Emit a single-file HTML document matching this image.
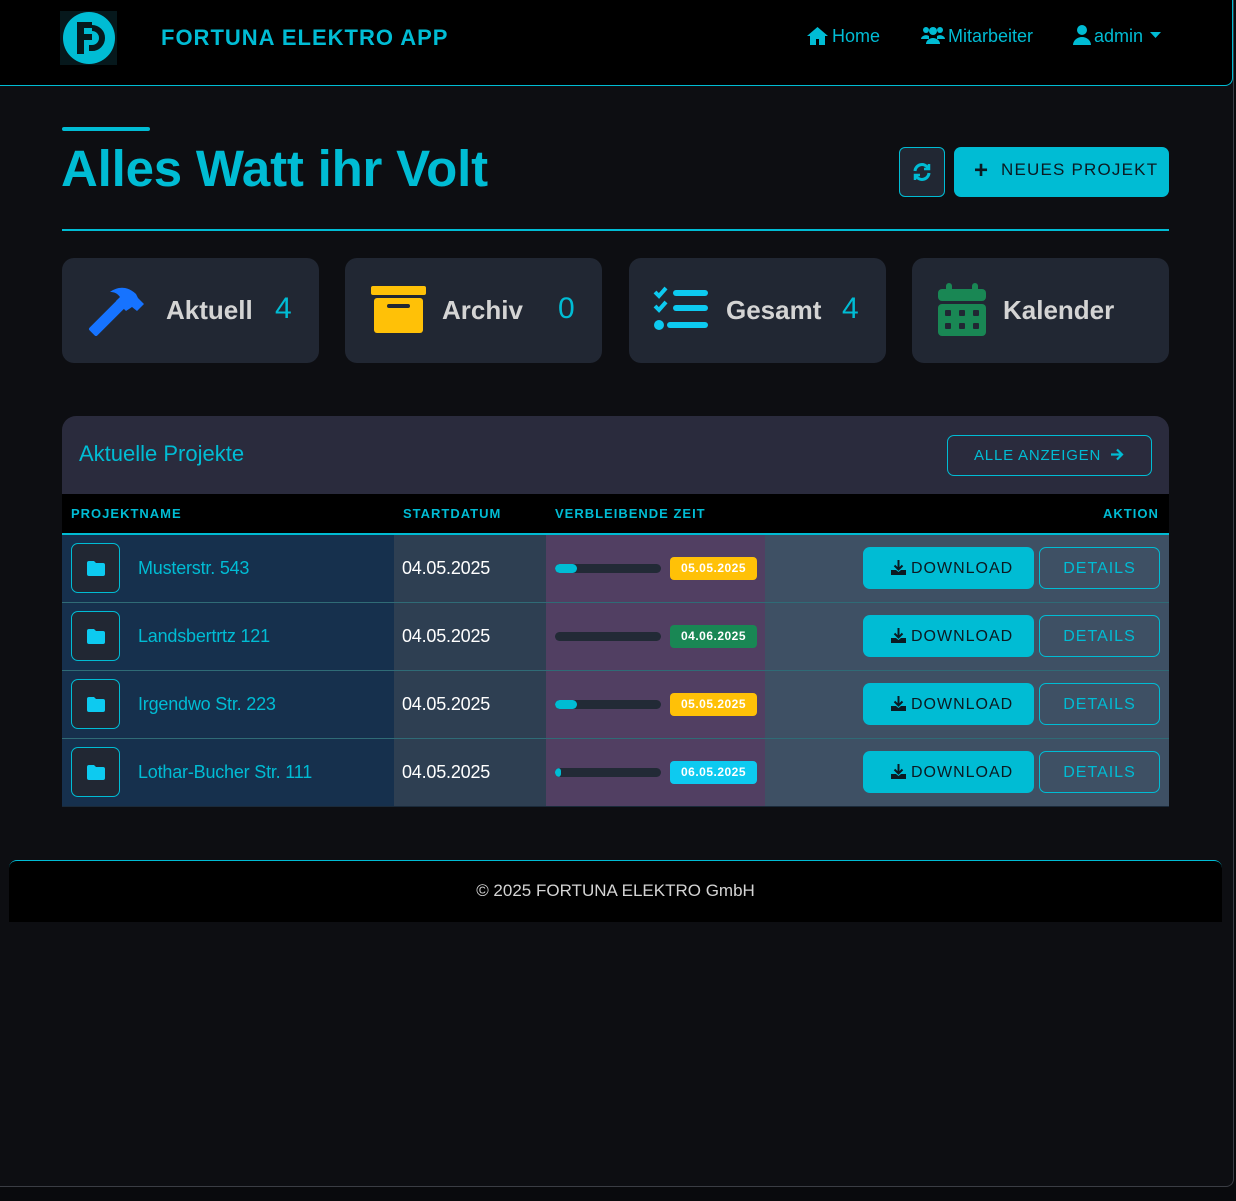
<!DOCTYPE html>
<html><head><meta charset="utf-8"><style>
*{box-sizing:border-box;margin:0;padding:0}
body{width:1236px;height:1201px;background:#090a0d;font-family:"Liberation Sans",sans-serif;position:relative;overflow:hidden}
.frame{position:absolute;left:0;top:0;width:1234px;height:1187px;background:#0d0e12;border-right:1px solid #3a3d44;border-bottom:1px solid #3a3d44;border-bottom-right-radius:8px}
.a{position:absolute}
.nav{left:0;top:0;width:1233px;height:86px;background:#000;border-bottom:1px solid #00bcd4;border-right:1px solid #00bcd4;border-bottom-right-radius:8px}
.cy{color:#00bcd4}
.card{position:absolute;top:258px;width:257px;height:105px;background:#212733;border-radius:12px}
.card .t{position:absolute;top:37px;font-size:26px;font-weight:bold;color:#d4d4d4}
.card .n{position:absolute;top:34px;font-size:30px;color:#00bcd4}
.row{position:absolute;left:62px;width:1107px;height:68px;border-bottom:1px solid #2f6b76}
.c1{position:absolute;left:0;width:332px;top:0;bottom:0;background:#16304d}
.c2{position:absolute;left:332px;width:152px;top:0;bottom:0;background:#2e3f52}
.c3{position:absolute;left:484px;width:219px;top:0;bottom:0;background:#513f62}
.c4{position:absolute;left:703px;width:404px;top:0;bottom:0;background:#3e5064}
.fb{position:absolute;left:9px;top:8px;width:49px;height:50px;border:1px solid #00bcd4;border-radius:7px;background:#212733}
.nm{position:absolute;left:76px;top:23px;font-size:18px;color:#00bcd4;letter-spacing:-.2px}
.dt{position:absolute;left:8px;top:23px;font-size:18px;color:#fff;letter-spacing:-.2px}
.bar{position:absolute;left:9px;top:29px;width:106px;height:9px;background:#222a36;border-radius:5px;overflow:hidden}
.bar i{display:block;height:100%;background:#00bcd4;border-radius:5px}
.bd{position:absolute;left:124px;top:22px;width:87px;height:23px;border-radius:4px;color:#fff;font-size:12px;font-weight:bold;text-align:center;line-height:23px;letter-spacing:.5px}
.dl{position:absolute;left:98px;top:12px;width:171px;height:42px;background:#00bcd4;border-radius:7px;color:#0b1a22;font-size:16px;letter-spacing:1px;line-height:44px;padding-left:48px}
.dl svg{position:absolute;left:28px;top:13px}
.de{position:absolute;left:274px;top:12px;width:121px;height:42px;border:1px solid #00bcd4;border-radius:7px;color:#00bcd4;font-size:16px;letter-spacing:1px;line-height:42px;text-align:center}
</style></head><body>
<div class="frame"></div>
<div class="a nav"></div>
<svg class="a" style="left:60px;top:11px" width="57" height="54" viewBox="0 0 57 54"><rect width="57" height="54" fill="#06181c"/><circle cx="29" cy="27" r="26" fill="#00bcd4"/><path d="M17 11h15v6h-8v6h8v6h-8v14h-7z" fill="#06181c"/><path d="M32 17a10 10 0 0 1 0 20h-3" stroke="#06181c" stroke-width="6" fill="none"/></svg>
<div class="a cy" style="left:161px;top:25px;font-size:22px;font-weight:bold;letter-spacing:1px">FORTUNA ELEKTRO APP</div>
<svg class="a" style="left:807px;top:27px" width="21" height="18" viewBox="0 0 21 18"><path d="M10.5 0L0 9h3v9h6v-6h3v6h6V9h3z" fill="#00bcd4"/></svg>
<div class="a cy" style="left:832px;top:26px;font-size:18px">Home</div>
<svg class="a" style="left:921px;top:26px" width="24" height="18" viewBox="0 0 24 18"><circle cx="5" cy="4" r="3" fill="#00bcd4"/><circle cx="19" cy="4" r="3" fill="#00bcd4"/><circle cx="12" cy="5" r="4" fill="#00bcd4"/><path d="M0 13a5 4 0 0 1 8-3v3zM24 13a5 4 0 0 0-8-3v3zM5 18a7 6 0 0 1 14 0z" fill="#00bcd4"/></svg>
<div class="a cy" style="left:948px;top:26px;font-size:18px">Mitarbeiter</div>
<svg class="a" style="left:1073px;top:25px" width="18" height="20" viewBox="0 0 18 20"><circle cx="9" cy="5" r="5" fill="#00bcd4"/><path d="M0 20a9 8 0 0 1 18 0z" fill="#00bcd4"/></svg>
<div class="a cy" style="left:1094px;top:26px;font-size:18px">admin</div>
<svg class="a" style="left:1150px;top:32px" width="11" height="6"><path d="M0 0h11L5.5 6z" fill="#00bcd4"/></svg>

<div class="a" style="left:62px;top:127px;width:88px;height:4px;background:#00bcd4;border-radius:2px"></div>
<div class="a cy" style="left:61px;top:139px;font-size:51px;font-weight:bold;letter-spacing:-.2px">Alles Watt ihr Volt</div>
<div class="a" style="left:899px;top:147px;width:46px;height:50px;border:1px solid #00bcd4;border-radius:6px;background:#212733"></div>
<svg class="a" style="left:912px;top:162px" width="20" height="20" viewBox="0 0 20 20" fill="none" stroke="#00bcd4" stroke-width="3"><path d="M3 9a7 7 0 0 1 13-3"/><path d="M17 11a7 7 0 0 1-13 3"/><path d="M17 2v5h-5" stroke-width="2.5"/><path d="M3 18v-5h5" stroke-width="2.5"/></svg>
<div class="a" style="left:954px;top:147px;width:215px;height:50px;background:#00bcd4;border-radius:7px;color:#0b1a22;font-size:17px;letter-spacing:1.2px;line-height:45px;padding-left:47px">NEUES PROJEKT</div>
<div class="a" style="left:974px;top:157px;font-size:24px;color:#0b1a22;font-weight:bold">+</div>
<div class="a" style="left:62px;top:229px;width:1107px;height:2px;background:#00bcd4"></div>

<div class="card" style="left:62px"><svg class="a" style="left:26px;top:26px" width="60" height="52" viewBox="0 0 60 52"><path d="M8 50l-5-5 28-28 5 5z" fill="#1673ff" stroke="#1673ff" stroke-width="4" stroke-linejoin="round"/><path d="M22 8c8-6 18-6 26 2l2 4 6 6-7 7-5-4-6 4-10-10 4-4c-3-4-6-5-10-5z" fill="#1673ff"/></svg><div class="t" style="left:104px">Aktuell</div><div class="n" style="left:213px">4</div></div>
<div class="card" style="left:345px"><svg class="a" style="left:26px;top:28px" width="55" height="48" viewBox="0 0 55 48"><rect x="0" y="0" width="55" height="9" rx="2" fill="#ffc107"/><rect x="3" y="12" width="49" height="35" rx="3" fill="#ffc107"/><rect x="16" y="18" width="23" height="4" rx="2" fill="#212733"/></svg><div class="t" style="left:97px">Archiv</div><div class="n" style="left:213px">0</div></div>
<div class="card" style="left:629px"><svg class="a" style="left:24px;top:28px" width="56" height="47" viewBox="0 0 56 47"><path d="M2 6l4 4 7-8M2 20l4 4 7-8" stroke="#0dcaf0" stroke-width="4" fill="none"/><circle cx="6" cy="39" r="5" fill="#0dcaf0"/><rect x="20" y="4" width="35" height="6" rx="3" fill="#0dcaf0"/><rect x="20" y="19" width="35" height="6" rx="3" fill="#0dcaf0"/><rect x="14" y="36" width="41" height="6" rx="3" fill="#0dcaf0"/></svg><div class="t" style="left:97px">Gesamt</div><div class="n" style="left:213px">4</div></div>
<div class="card" style="left:912px"><svg class="a" style="left:26px;top:25px" width="48" height="54" viewBox="0 0 48 54"><rect x="8" y="0" width="6" height="10" rx="3" fill="#198754"/><rect x="34" y="0" width="6" height="10" rx="3" fill="#198754"/><rect x="0" y="6" width="48" height="12" rx="4" fill="#198754"/><rect x="0" y="21" width="48" height="32" rx="4" fill="#198754"/><g fill="#212733"><rect x="7" y="27" width="6" height="6" rx="1"/><rect x="21" y="27" width="6" height="6" rx="1"/><rect x="35" y="27" width="6" height="6" rx="1"/><rect x="7" y="40" width="6" height="6" rx="1"/><rect x="21" y="40" width="6" height="6" rx="1"/><rect x="35" y="40" width="6" height="6" rx="1"/></g></svg><div class="t" style="left:91px">Kalender</div></div>

<div class="a" style="left:62px;top:416px;width:1107px;height:78px;background:#2a2b3d;border-radius:14px 14px 0 0"></div>
<div class="a cy" style="left:79px;top:441px;font-size:22px">Aktuelle Projekte</div>
<div class="a" style="left:947px;top:435px;width:205px;height:41px;border:1px solid #00bcd4;border-radius:7px;color:#00bcd4;font-size:15px;letter-spacing:.8px;line-height:39px;padding-left:26px">ALLE ANZEIGEN</div>
<svg class="a" style="left:1110px;top:448px" width="14" height="13" viewBox="0 0 14 13"><path d="M1 6.5h11M7 1.5l5 5-5 5" stroke="#00bcd4" stroke-width="2.2" fill="none"/></svg>
<div class="a" style="left:62px;top:494px;width:1107px;height:41px;background:#000;border-bottom:2px solid #00bcd4"></div>
<div class="a cy" style="left:71px;top:506px;font-size:13px;font-weight:bold;letter-spacing:1px">PROJEKTNAME</div>
<div class="a cy" style="left:403px;top:506px;font-size:13px;font-weight:bold;letter-spacing:1px">STARTDATUM</div>
<div class="a cy" style="left:555px;top:506px;font-size:13px;font-weight:bold;letter-spacing:1px">VERBLEIBENDE ZEIT</div>
<div class="a cy" style="left:1103px;top:506px;font-size:13px;font-weight:bold;letter-spacing:1px">AKTION</div>

<div class="row" style="top:535px"><div class="c1"><div class="fb"></div><svg class="a" style="left:25px;top:26px" width="18" height="15" viewBox="0 0 18 15"><path d="M0 2a2 2 0 0 1 2-2h5l2 2h7a2 2 0 0 1 2 2v9a2 2 0 0 1-2 2H2a2 2 0 0 1-2-2z" fill="#0dcaf0"/></svg><div class="nm">Musterstr. 543</div></div><div class="c2"><div class="dt">04.05.2025</div></div><div class="c3"><div class="bar"><i style="width:21%"></i></div><div class="bd" style="background:#ffc107">05.05.2025</div></div><div class="c4"><div class="dl"><svg width="15" height="15" viewBox="0 0 15 15"><path d="M7.5 0v9M3.5 5.5l4 4 4-4" stroke="#0b1a22" stroke-width="2" fill="none"/><path d="M0 10h5l2.5 2 2.5-2h5v5H0z" fill="#0b1a22"/></svg>DOWNLOAD</div><div class="de">DETAILS</div></div></div>
<div class="row" style="top:603px"><div class="c1"><div class="fb"></div><svg class="a" style="left:25px;top:26px" width="18" height="15" viewBox="0 0 18 15"><path d="M0 2a2 2 0 0 1 2-2h5l2 2h7a2 2 0 0 1 2 2v9a2 2 0 0 1-2 2H2a2 2 0 0 1-2-2z" fill="#0dcaf0"/></svg><div class="nm">Landsbertrtz 121</div></div><div class="c2"><div class="dt">04.05.2025</div></div><div class="c3"><div class="bar"><i style="width:0"></i></div><div class="bd" style="background:#198754">04.06.2025</div></div><div class="c4"><div class="dl"><svg width="15" height="15" viewBox="0 0 15 15"><path d="M7.5 0v9M3.5 5.5l4 4 4-4" stroke="#0b1a22" stroke-width="2" fill="none"/><path d="M0 10h5l2.5 2 2.5-2h5v5H0z" fill="#0b1a22"/></svg>DOWNLOAD</div><div class="de">DETAILS</div></div></div>
<div class="row" style="top:671px"><div class="c1"><div class="fb"></div><svg class="a" style="left:25px;top:26px" width="18" height="15" viewBox="0 0 18 15"><path d="M0 2a2 2 0 0 1 2-2h5l2 2h7a2 2 0 0 1 2 2v9a2 2 0 0 1-2 2H2a2 2 0 0 1-2-2z" fill="#0dcaf0"/></svg><div class="nm">Irgendwo Str. 223</div></div><div class="c2"><div class="dt">04.05.2025</div></div><div class="c3"><div class="bar"><i style="width:21%"></i></div><div class="bd" style="background:#ffc107">05.05.2025</div></div><div class="c4"><div class="dl"><svg width="15" height="15" viewBox="0 0 15 15"><path d="M7.5 0v9M3.5 5.5l4 4 4-4" stroke="#0b1a22" stroke-width="2" fill="none"/><path d="M0 10h5l2.5 2 2.5-2h5v5H0z" fill="#0b1a22"/></svg>DOWNLOAD</div><div class="de">DETAILS</div></div></div>
<div class="row" style="top:739px;border-bottom:1px solid #1a2a3a"><div class="c1"><div class="fb"></div><svg class="a" style="left:25px;top:26px" width="18" height="15" viewBox="0 0 18 15"><path d="M0 2a2 2 0 0 1 2-2h5l2 2h7a2 2 0 0 1 2 2v9a2 2 0 0 1-2 2H2a2 2 0 0 1-2-2z" fill="#0dcaf0"/></svg><div class="nm">Lothar-Bucher Str. 111</div></div><div class="c2"><div class="dt">04.05.2025</div></div><div class="c3"><div class="bar"><i style="width:6%"></i></div><div class="bd" style="background:#0dcaf0">06.05.2025</div></div><div class="c4"><div class="dl"><svg width="15" height="15" viewBox="0 0 15 15"><path d="M7.5 0v9M3.5 5.5l4 4 4-4" stroke="#0b1a22" stroke-width="2" fill="none"/><path d="M0 10h5l2.5 2 2.5-2h5v5H0z" fill="#0b1a22"/></svg>DOWNLOAD</div><div class="de">DETAILS</div></div></div>

<div class="a" style="left:9px;top:860px;width:1213px;height:62px;background:#000;border-top:1px solid #00bcd4;border-radius:8px 8px 0 0;color:#d4d4d4;font-size:17px;text-align:center;line-height:60px">© 2025 FORTUNA ELEKTRO GmbH</div>
</body></html>
